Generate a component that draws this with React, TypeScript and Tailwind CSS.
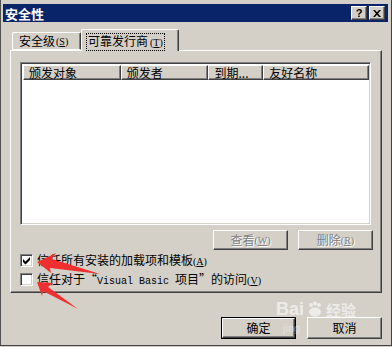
import React from 'react';

const raised =
  'border-t border-l border-t-white border-l-white border-r border-b border-r-[#404040] border-b-[#404040] shadow-[inset_-1px_-1px_0_#808080]';

const cjk = "font-['Noto_Sans_CJK_SC','Noto_Sans',sans-serif]";

function Check({ checked, label }: { checked?: boolean; label: React.ReactNode }) {
  return (
    <div className="flex items-center h-[13px] gap-[4px]">
      <div className="w-[13px] h-[13px] bg-white border-t border-l border-[#808080] border-r border-b border-r-white border-b-white shadow-[inset_1px_1px_0_#404040,inset_-1px_-1px_0_#d4d0c8] flex items-center justify-center">
        {checked && (
          <svg width="9" height="9" viewBox="0 0 9 9">
            <path d="M1 3 L3.5 5.5 L8 1 L8 4 L3.5 8.5 L1 6 Z" fill="#000" />
          </svg>
        )}
      </div>
      <span className="text-[12px] leading-[13px] text-black whitespace-nowrap">{label}</span>
    </div>
  );
}

function DisabledBtn({ text, k }: { text: string; k: string }) {
  return (
    <div className={`w-[75px] h-[20px] bg-[#d4d0c8] ${raised} flex items-center justify-center text-[12px] text-[#808080] [text-shadow:1px_1px_0_#fff]`}>
      {text}
      <span className="text-[10px] font-['Liberation_Serif',serif]">(<u>{k}</u>)</span>
    </div>
  );
}

export default function App() {
  const cols = [
    { t: '颁发对象', w: 'w-[98px]' },
    { t: '颁发者', w: 'w-[88px]' },
    { t: '到期...', w: 'w-[55px]' },
    { t: '友好名称', w: 'w-[106px]' },
  ];

  return (
    <div className={`relative w-[392px] h-[347px] overflow-hidden bg-[#d4d0c8] ${cjk}`}>
      <div className="h-[346px] border-l border-l-[#505050] border-b border-b-[#404040] pl-[2px] pt-[4px] pr-[3px] flex flex-col border-r border-r-[#404040]">
        {/* title bar */}
        <div className="h-[18px] bg-[#0a246a] flex items-center justify-between pl-[2px] pr-[3px]">
          <span className="text-white font-bold text-[13px] leading-none">安全性</span>
          <div className="flex gap-[2px]">
            <div className={`w-[16px] h-[14px] bg-[#d4d0c8] ${raised} flex items-center justify-center text-[11px] font-bold font-['Liberation_Sans',sans-serif] leading-none`}>?</div>
            <div className={`w-[16px] h-[14px] bg-[#d4d0c8] ${raised} flex items-center justify-center`}>
              <svg width="8" height="7" viewBox="0 0 8 7">
                <path d="M0 0 L2 0 L4 2.3 L6 0 L8 0 L5 3.5 L8 7 L6 7 L4 4.7 L2 7 L0 7 L3 3.5 Z" fill="#000" />
              </svg>
            </div>
          </div>
        </div>

        {/* tabs */}
        <div className="ml-[7px] mt-[7px] w-[372px] flex flex-col">
          <div className="flex items-end h-[21px] pl-[2px]">
            <div className="w-[69px] h-[18px] border-t border-l border-white border-r border-r-[#404040] rounded-tl-[2px] rounded-tr-[2px] shadow-[inset_-1px_0_0_#808080] text-[12px] flex items-center pl-[6px] border-b border-b-white">
              安全级<span className="text-[10px] font-['Liberation_Serif',serif] ml-[1px]">(<u>S</u>)</span>
            </div>
            <div className="relative z-10 -mb-[1px] w-[98px] h-[22px] bg-[#d4d0c8] border-t border-l border-white border-r border-r-[#404040] rounded-tl-[2px] rounded-tr-[2px] shadow-[inset_-1px_0_0_#808080] text-[12px] flex items-start pt-[3px] pl-[4px]">
              <span className="border border-dotted border-black px-[1px] leading-[14px]">
                可靠发行商<span className="text-[10px] font-['Liberation_Serif',serif] ml-[2px]">(<u>T</u>)</span>
              </span>
            </div>
          </div>

          {/* panel */}
          <div className={`h-[243px] ${raised} flex flex-col pl-[9px] pr-[8px] pt-[11px]`}>
            <div className="w-[351px] h-[163px] bg-white border-t border-l border-[#808080] border-r border-b border-r-white border-b-white shadow-[inset_1px_1px_0_#404040,inset_-1px_-1px_0_#d4d0c8] p-[1px]">
              <div className="flex h-[15px] mt-[1px] ml-[1px]">
                {cols.map((c) => (
                  <div key={c.t} className={`${c.w} h-[15px] bg-[#d4d0c8] ${raised} text-[12px] leading-[14px] pl-[5px] whitespace-nowrap overflow-hidden`}>
                    {c.t}
                  </div>
                ))}
              </div>
            </div>

            <div className="flex justify-end gap-[10px] mt-[5px]">
              <DisabledBtn text="查看" k="W" />
              <DisabledBtn text="删除" k="R" />
            </div>

            <div className="flex flex-col gap-[6px] mt-[4px]">
              <Check
                checked
                label={
                  <>
                    信任所有安装的加载项和模板<span className="text-[10px] font-['Liberation_Serif',serif]">(<u>A</u>)</span>
                  </>
                }
              />
              <Check
                label={
                  <>
                    信任对于“<span className="text-[10px] font-['Liberation_Mono',monospace]">Visual Basic </span>项目”的访问
                    <span className="text-[10px] font-['Liberation_Serif',serif]">(<u>V</u>)</span>
                  </>
                }
              />
            </div>
          </div>

          {/* OK / Cancel */}
          <div className="flex justify-end gap-[11px] mt-[24px]">
            <div className="w-[75px] h-[22px] border border-black">
              <div className={`h-full bg-[#d4d0c8] ${raised} flex items-center justify-center text-[12px]`}>确定</div>
            </div>
            <div className={`w-[75px] h-[22px] bg-[#d4d0c8] ${raised} flex items-center justify-center text-[12px]`}>取消</div>
          </div>
        </div>
      </div>

      {/* watermark */}
      <div className="absolute left-[276px] top-[300px] flex items-center gap-[3px] text-white/60 pointer-events-none">
        <span className="text-[18px] font-bold font-['Liberation_Sans',sans-serif] leading-none">Bai</span>
        <svg width="16" height="16" viewBox="0 0 16 16">
          <circle cx="4" cy="4" r="2" fill="rgba(255,255,255,0.6)" />
          <circle cx="8" cy="2.5" r="2" fill="rgba(255,255,255,0.6)" />
          <circle cx="12" cy="4" r="2" fill="rgba(255,255,255,0.6)" />
          <ellipse cx="8" cy="11" rx="6" ry="4.5" fill="rgba(255,255,255,0.6)" />
        </svg>
        <span className="text-[15px] font-bold leading-none">经验</span>
      </div>
      <div className="absolute left-[283px] top-[323px] text-[11px] text-white/40 font-['Liberation_Sans',sans-serif] leading-none pointer-events-none">
        jing
      </div>

      {/* red arrows */}
      <svg className="absolute left-0 top-0 pointer-events-none" width="392" height="347">
        <path d="M37 262 L56 253 L52 259 L100 274 L50 268 L51 273 Z" fill="#f03030" />
        <path d="M37 282 L53 283 L48 287 L78 309 L43 291 L42 296 Z" fill="#f03030" />
      </svg>
    </div>
  );
}
